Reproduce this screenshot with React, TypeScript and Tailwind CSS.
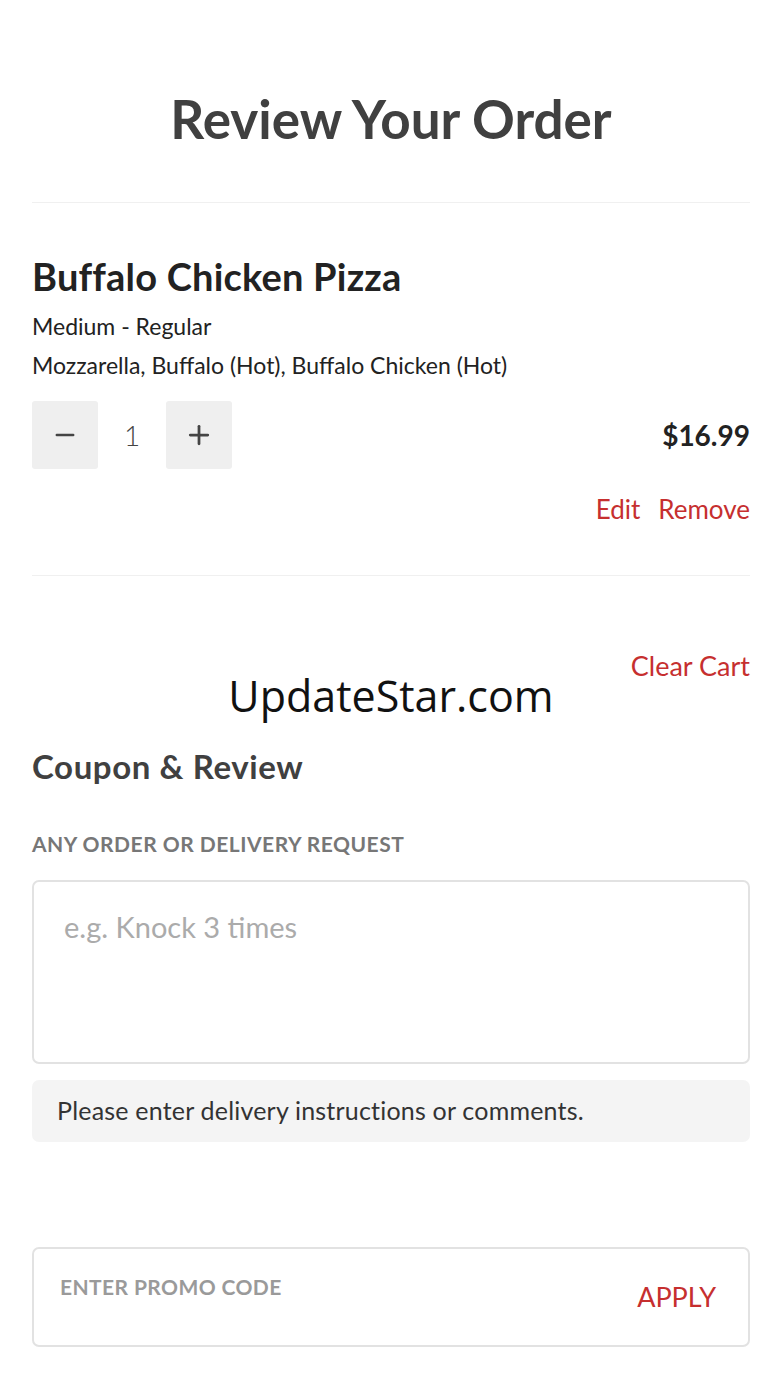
import { Minus, Plus } from "lucide-react";

const font = { fontFamily: "Lato, 'Open Sans', sans-serif" };

export default function App() {
  return (
    <div className="min-h-[1387px] w-full bg-white" style={font}>
      <div className="pl-[32px] pr-[30px]">
        {/* header */}
        <div className="flex h-[203px] items-center justify-center border-b border-[#f0f0f0] pt-[34px]">
          <h1 className="text-[53px] font-bold leading-none text-[#404040]">Review Your Order</h1>
        </div>

        {/* cart item */}
        <div className="border-b border-[#f0f0f0] pt-[54px] pb-[53px]">
          <h2 className="text-[38px] font-bold leading-none tracking-[0.2px] text-[#222]">Buffalo Chicken Pizza</h2>
          <p className="mt-[12px] text-[23px] leading-[39px] text-[#222]">Medium - Regular</p>
          <p className="text-[23px] leading-[39px] text-[#222]">Mozzarella, Buffalo (Hot), Buffalo Chicken (Hot)</p>
          <div className="mt-[16px] flex items-center justify-between">
            <div className="flex items-center">
              <button className="flex h-[68px] w-[66px] items-center justify-center rounded-[3px] bg-[#efefef] text-[#444]">
                <Minus size={28} strokeWidth={2.2} />
              </button>
              <span className="w-[68px] text-center text-[28px] font-light text-[#444]">1</span>
              <button className="flex h-[68px] w-[66px] items-center justify-center rounded-[3px] bg-[#efefef] text-[#444]">
                <Plus size={30} strokeWidth={2.2} />
              </button>
            </div>
            <span className="text-[28px] font-bold text-[#222]">$16.99</span>
          </div>
          <div className="mt-[27px] flex justify-end gap-[18px] text-[26px] leading-none text-[#c62f2f]">
            <span>Edit</span>
            <span>Remove</span>
          </div>
        </div>

        {/* clear cart */}
        <div className="flex justify-end pt-[76px]">
          <span className="text-[27px] leading-none text-[#c62f2f]">Clear Cart</span>
        </div>
        <div className="-mt-[5px] flex justify-center">
          <span className="text-[43px] leading-none text-[#111]" style={{ fontFamily: "'Open Sans', sans-serif" }}>
            UpdateStar.com
          </span>
        </div>

        <h3 className="mt-[33px] text-[33px] font-bold leading-none tracking-[0.6px] text-[#404040]">Coupon &amp; Review</h3>
        <p className="mt-[50px] text-[21px] font-bold uppercase leading-none tracking-[0.5px] text-[#777]">
          Any order or delivery request
        </p>

        <div className="mt-[26px] h-[184px] rounded-[7px] border-2 border-[#e2e2e2] px-[30px] pt-[30px]">
          <span className="text-[29px] leading-none text-[#ababab]">e.g. Knock 3 times</span>
        </div>
        <div className="mt-[16px] flex h-[62px] items-center rounded-[7px] bg-[#f4f4f4] px-[25px]">
          <span className="text-[25px] tracking-[0.2px] text-[#333]">Please enter delivery instructions or comments.</span>
        </div>

        <div className="mt-[105px] flex h-[100px] justify-between rounded-[7px] border-2 border-[#e2e2e2] pl-[26px] pr-[32px]">
          <span className="pt-[27px] text-[21px] font-bold uppercase leading-none tracking-[0.4px] text-[#9a9a9a]">Enter promo code</span>
          <span className="pt-[34px] text-[27px] leading-none text-[#c62f2f]">APPLY</span>
        </div>
      </div>
    </div>
  );
}
